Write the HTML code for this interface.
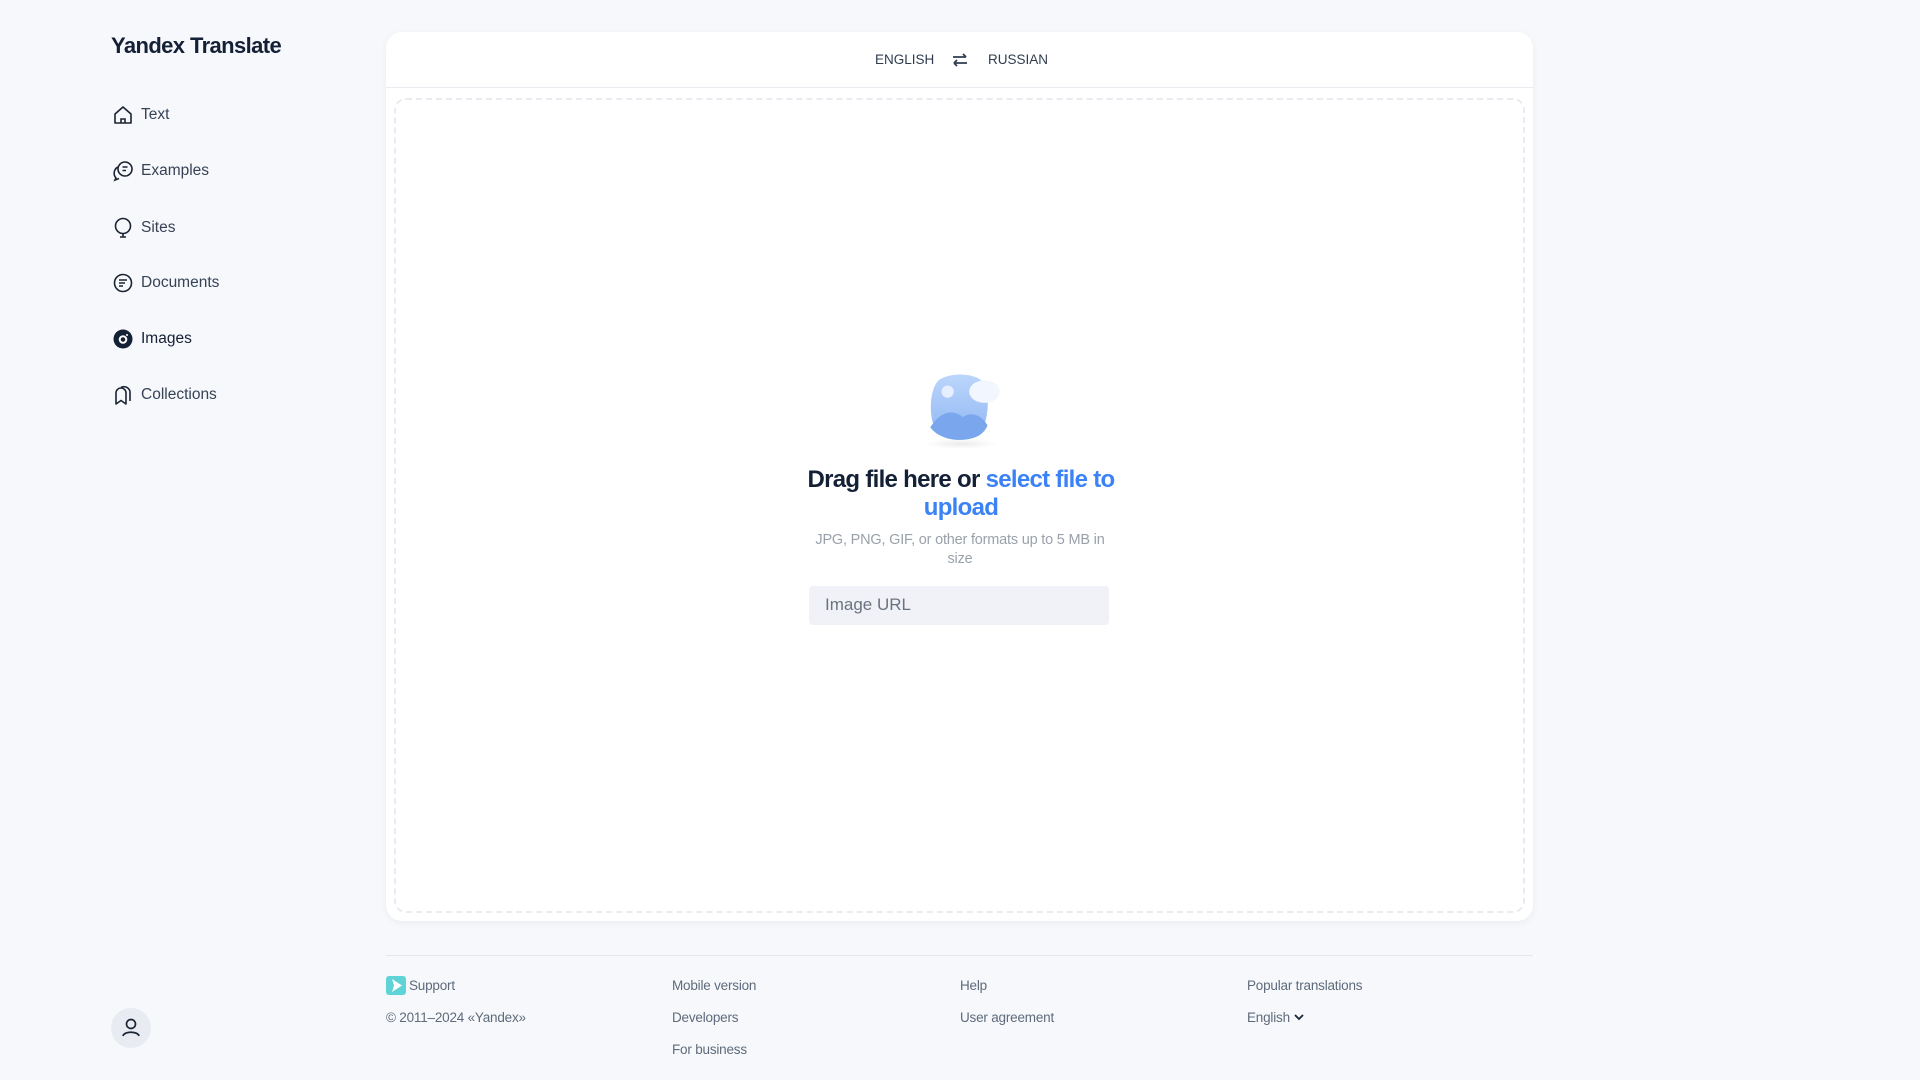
<!DOCTYPE html>
<html><head><meta charset="utf-8"><style>
*{box-sizing:border-box;margin:0;padding:0}
body{width:1920px;height:1080px;background:#f6f8fb;font-family:"Liberation Sans",sans-serif;color:#1b2433;position:relative;overflow:hidden}
.title{position:absolute;left:111px;top:33px;font-size:22px;font-weight:bold;color:#142035;letter-spacing:-0.6px}
.nav{position:absolute;left:112px;font-size:15.5px;color:#364356;display:flex;align-items:center}
.nav svg{width:22px;height:22px;margin-right:7px}
.card{position:absolute;left:386px;top:32px;width:1147px;height:889px;background:#fff;border-radius:16px;box-shadow:0 2px 8px rgba(0,0,0,.05)}
.hdr{position:absolute;left:0;top:0;width:100%;height:56px;border-bottom:1px solid #e8ebf0}
.lang{position:absolute;top:20px;font-size:13.5px;color:#2f3d4e;letter-spacing:0}
.drop{position:absolute;left:8px;top:66px;right:8px;bottom:8px;border:2px dashed #e9ebf1;border-radius:12px}
.h{position:absolute;left:405px;top:434px;width:340px;text-align:center;font-size:24px;font-weight:bold;line-height:28px;color:#142035;letter-spacing:-0.7px}
.h span{color:#3a82f6}
.sub{position:absolute;left:418px;top:499px;width:312px;text-align:center;font-size:14.5px;line-height:19px;color:#9aa1ab;letter-spacing:-0.2px}
.inp{position:absolute;left:423px;top:554px;width:300px;height:39px;background:#f0f2f7;border-radius:4px;font-size:17px;color:#6b7280;padding:9px 0 0 16px}
.line{position:absolute;left:386px;top:955px;width:1147px;height:1px;background:#e3e6eb}
.f{position:absolute;font-size:13.5px;color:#5f6b7b;letter-spacing:-0.2px}
.av{position:absolute;left:111px;top:1008px;width:40px;height:40px;border-radius:50%;background:#e8ebf2}
</style></head><body>
<div class="title">Yandex Translate</div>
<div class="nav" style="top:104px"><svg viewBox="0 0 22 22" fill="none" stroke="#1b2433" stroke-width="1.6"><path d="M3 10 L11 3 L19 10 V19 H3 Z" stroke-linejoin="round"/><path d="M9 19 V15 H13 V19"/></svg>Text</div>
<div class="nav" style="top:160px"><svg viewBox="0 0 22 22" fill="none" stroke="#1b2433" stroke-width="1.6"><circle cx="13" cy="9" r="7"/><path d="M10.5 7 H15.5 M10.5 10.5 H14"/><path d="M6 7 A7 7 0 0 0 4 18 L3 20 L7 18.5"/></svg>Examples</div>
<div class="nav" style="top:217px"><svg viewBox="0 0 22 22" fill="none" stroke="#1b2433" stroke-width="1.6"><circle cx="11" cy="9" r="7.5"/><path d="M11 16.5 V20 M8 20 H14"/></svg>Sites</div>
<div class="nav" style="top:272px"><svg viewBox="0 0 22 22" fill="none" stroke="#1b2433" stroke-width="1.6"><circle cx="11" cy="11" r="8.5"/><path d="M7 8 H15 M7 11 H13 M7 14 H11"/></svg>Documents</div>
<div class="nav" style="top:328px;color:#142035"><svg viewBox="0 0 22 22"><circle cx="11" cy="11" r="9.5" fill="#142035"/><circle cx="11" cy="11.5" r="3.3" fill="none" stroke="#fff" stroke-width="2"/><circle cx="15" cy="7" r="1" fill="#fff"/></svg>Images</div>
<div class="nav" style="top:384px"><svg viewBox="0 0 22 22" fill="none" stroke="#1b2433" stroke-width="1.6"><path d="M4 20 V9 A5 5 0 0 1 14 9 V20 L9 16.5 Z" stroke-linejoin="round"/><path d="M9 3.5 A6 6 0 0 1 18 9 V17"/></svg>Collections</div>

<div class="card">
<div class="hdr">
<div class="lang" style="left:489px">ENGLISH</div>
<svg style="position:absolute;left:566px;top:20px" width="16" height="16" viewBox="0 0 16 16" fill="none" stroke="#2f3d4e" stroke-width="1.8"><path d="M1 5 H14 M11 2 L14 5"/><path d="M15 11 H2 M5 8 L2 11 M5 14 L2 11"/></svg>
<div class="lang" style="left:602px">RUSSIAN</div>
</div>
<div class="drop"></div>
<svg style="position:absolute;left:530px;top:336px" width="92" height="82" viewBox="0 0 90 80">
<defs><linearGradient id="g" x1="0" y1="0" x2="0" y2="1"><stop offset="0" stop-color="#bcd6fb"/><stop offset="1" stop-color="#8db5f3"/></linearGradient><radialGradient id="s"><stop offset="0" stop-color="#000" stop-opacity=".08"/><stop offset="1" stop-color="#000" stop-opacity="0"/></radialGradient></defs>
<ellipse cx="44" cy="74" rx="36" ry="5" fill="url(#s)"/>
<path d="M22 12 C32 4 58 4 66 14 C74 26 70 60 60 66 C50 72 30 72 22 64 C12 54 12 22 22 12Z" fill="url(#g)"/>
<path d="M14 58 C24 42 36 40 46 48 C54 42 64 46 70 56 C66 66 56 70 44 70 C30 70 20 66 14 58Z" fill="#7aa6ee"/>
<circle cx="31" cy="23" r="6" fill="#e5efff"/>
<ellipse cx="67" cy="23" rx="15" ry="11" fill="#f2f6fe"/>
</svg>
<div class="h">Drag file here or <span>select file to upload</span></div>
<div class="sub">JPG, PNG, GIF, or other formats up to 5 MB in size</div>
<div class="inp">Image URL</div>
</div>

<div class="line"></div>
<svg style="position:absolute;left:386px;top:976px" width="20" height="19" viewBox="0 0 20 19"><rect width="20" height="19" rx="3" fill="#5fd3d6"/><path d="M6 3 L16 9.5 L6 16 L8 9.5Z" fill="#fff"/></svg>
<div class="f" style="left:409px;top:978px">Support</div>
<div class="f" style="left:386px;top:1010px">© 2011–2024 «Yandex»</div>
<div class="f" style="left:672px;top:978px">Mobile version</div>
<div class="f" style="left:672px;top:1010px">Developers</div>
<div class="f" style="left:672px;top:1042px">For business</div>
<div class="f" style="left:960px;top:978px">Help</div>
<div class="f" style="left:960px;top:1010px">User agreement</div>
<div class="f" style="left:1247px;top:978px">Popular translations</div>
<div class="f" style="left:1247px;top:1010px">English <svg width="12" height="10" viewBox="0 0 12 10" fill="none" stroke="#1b2433" stroke-width="1.8"><path d="M2 3 L6 7 L10 3"/></svg></div>
<div class="av"><svg width="40" height="40" viewBox="0 0 40 40" fill="none" stroke="#1b2433" stroke-width="1.7"><circle cx="20" cy="16" r="4.5"/><path d="M12 28 C13 23 27 23 28 28"/></svg></div>
</body></html>
